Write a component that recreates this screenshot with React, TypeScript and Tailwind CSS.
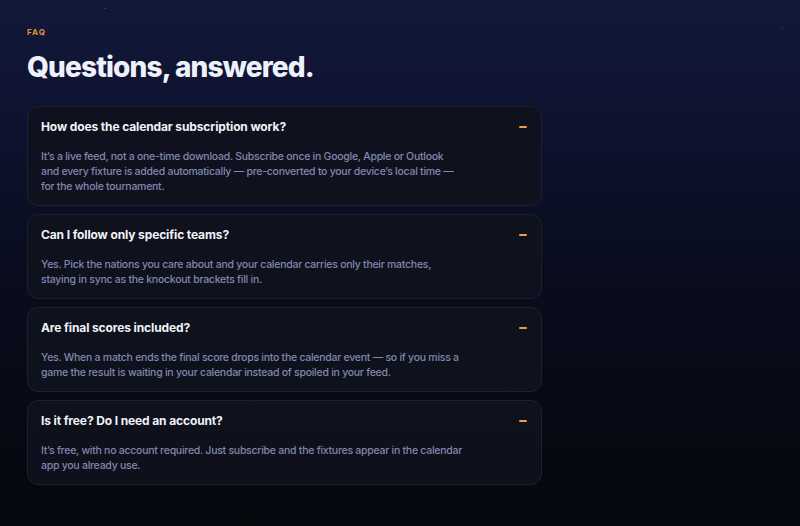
import React from "react";

type Item = { q: string; a: string[] };

const items: Item[] = [
  {
    q: "How does the calendar subscription work?",
    a: [
      "It\u2019s a live feed, not a one-time download. Subscribe once in Google, Apple or Outlook",
      "and every fixture is added automatically \u2014 pre-converted to your device\u2019s local time \u2014",
      "for the whole tournament.",
    ],
  },
  {
    q: "Can I follow only specific teams?",
    a: [
      "Yes. Pick the nations you care about and your calendar carries only their matches,",
      "staying in sync as the knockout brackets fill in.",
    ],
  },
  {
    q: "Are final scores included?",
    a: [
      "Yes. When a match ends the final score drops into the calendar event \u2014 so if you miss a",
      "game the result is waiting in your calendar instead of spoiled in your feed.",
    ],
  },
  {
    q: "Is it free? Do I need an account?",
    a: [
      "It\u2019s free, with no account required. Just subscribe and the fixtures appear in the calendar",
      "app you already use.",
    ],
  },
];

function FaqCard({ item }: { item: Item }) {
  return (
    <div className="rounded-[11px] border border-[#1c2030] bg-[#10131d]/90 px-[13px] pt-[11px] pb-[11px]">
      <div className="flex h-[18px] items-center justify-between">
        <h3 className="text-[12px] font-bold leading-[18px] tracking-[-0.01em] text-[#f1f2f8]">
          {item.q}
        </h3>
        <span className="mr-[1px] block h-[2px] w-[8px] rounded-[1px] bg-[#f0a040]" />
      </div>
      <p className="mt-[13px] text-[10.5px] font-medium leading-[15px] tracking-[-0.025em] text-[#8286ad]">
        {item.a.map((line, i) => (
          <span key={i} className="block whitespace-nowrap">
            {line}
          </span>
        ))}
      </p>
    </div>
  );
}

export default function App() {
  return (
    <div
      className="relative min-h-[526px] w-full overflow-hidden bg-[linear-gradient(180deg,#121839_0%,#0e1330_22%,#090c1c_55%,#05070d_100%)]"
      style={{ fontFamily: "Inter, 'Noto Sans', sans-serif" }}
    >
      {/* faint stars */}
      <span className="absolute left-[105px] top-[8px] h-[1px] w-[1px] bg-[#5a6290]" />
      <span className="absolute left-[434px] top-[138px] h-[1px] w-[1px] bg-[#7a80a8]" />
      <span className="absolute left-[782px] top-[27px] h-[1px] w-[1px] bg-[#4a5280]" />

      <section className="relative px-[27px] pt-[27px]">
        <div className="text-[8px] font-bold leading-[10px] tracking-[0.14em] text-[#e0903a]">
          FAQ
        </div>
        <h2 className="mt-[12px] text-[28px] font-extrabold leading-[36px] tracking-[-0.03em] text-[#eef0fa]">
          Questions, answered.
        </h2>
        <div className="mt-[21px] flex w-[515px] flex-col gap-[8px]">
          {items.map((it) => (
            <FaqCard key={it.q} item={it} />
          ))}
        </div>
      </section>
    </div>
  );
}
